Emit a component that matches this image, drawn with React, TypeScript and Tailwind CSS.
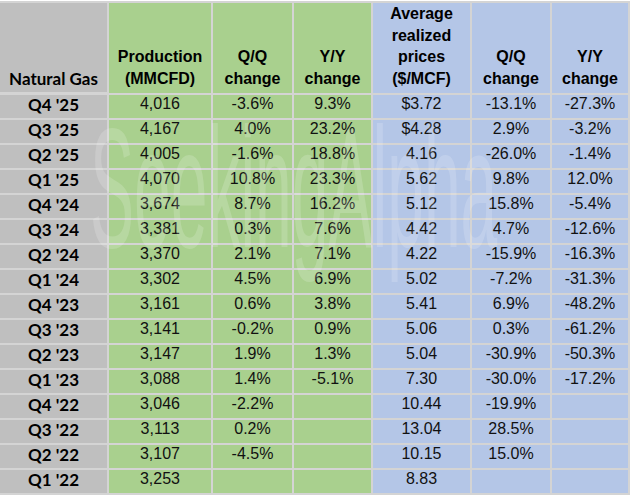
import React from "react";

type Row = {
  label: string;
  production: string;
  prodQq: string;
  prodYy: string;
  price: string;
  priceQq: string;
  priceYy: string;
};

const rows: Row[] = [
  { label: "Q4 '25", production: "4,016", prodQq: "-3.6%", prodYy: "9.3%", price: "$3.72", priceQq: "-13.1%", priceYy: "-27.3%" },
  { label: "Q3 '25", production: "4,167", prodQq: "4.0%", prodYy: "23.2%", price: "$4.28", priceQq: "2.9%", priceYy: "-3.2%" },
  { label: "Q2 '25", production: "4,005", prodQq: "-1.6%", prodYy: "18.8%", price: "4.16", priceQq: "-26.0%", priceYy: "-1.4%" },
  { label: "Q1 '25", production: "4,070", prodQq: "10.8%", prodYy: "23.3%", price: "5.62", priceQq: "9.8%", priceYy: "12.0%" },
  { label: "Q4 '24", production: "3,674", prodQq: "8.7%", prodYy: "16.2%", price: "5.12", priceQq: "15.8%", priceYy: "-5.4%" },
  { label: "Q3 '24", production: "3,381", prodQq: "0.3%", prodYy: "7.6%", price: "4.42", priceQq: "4.7%", priceYy: "-12.6%" },
  { label: "Q2 '24", production: "3,370", prodQq: "2.1%", prodYy: "7.1%", price: "4.22", priceQq: "-15.9%", priceYy: "-16.3%" },
  { label: "Q1 '24", production: "3,302", prodQq: "4.5%", prodYy: "6.9%", price: "5.02", priceQq: "-7.2%", priceYy: "-31.3%" },
  { label: "Q4 '23", production: "3,161", prodQq: "0.6%", prodYy: "3.8%", price: "5.41", priceQq: "6.9%", priceYy: "-48.2%" },
  { label: "Q3 '23", production: "3,141", prodQq: "-0.2%", prodYy: "0.9%", price: "5.06", priceQq: "0.3%", priceYy: "-61.2%" },
  { label: "Q2 '23", production: "3,147", prodQq: "1.9%", prodYy: "1.3%", price: "5.04", priceQq: "-30.9%", priceYy: "-50.3%" },
  { label: "Q1 '23", production: "3,088", prodQq: "1.4%", prodYy: "-5.1%", price: "7.30", priceQq: "-30.0%", priceYy: "-17.2%" },
  { label: "Q4 '22", production: "3,046", prodQq: "-2.2%", prodYy: "", price: "10.44", priceQq: "-19.9%", priceYy: "" },
  { label: "Q3 '22", production: "3,113", prodQq: "0.2%", prodYy: "", price: "13.04", priceQq: "28.5%", priceYy: "" },
  { label: "Q2 '22", production: "3,107", prodQq: "-4.5%", prodYy: "", price: "10.15", priceQq: "15.0%", priceYy: "" },
  { label: "Q1 '22", production: "3,253", prodQq: "", prodYy: "", price: "8.83", priceQq: "", priceYy: "" },
];

const head = "flex items-end justify-center pb-[4px] text-center font-bold text-[16px] leading-[21.5px] text-black";
const cell = "h-[23px] text-center text-[16px] leading-[18px] text-[#111]";
const green = "bg-[#a9d08e]";
const blue = "bg-[#b4c6e7]";

export default function App() {
  return (
    <div className="relative h-[496px] w-[632px] overflow-hidden bg-white font-['Liberation_Sans',Arial,sans-serif]">
      <div className="mt-[1px] grid w-[630px] grid-cols-[107px_102px_79px_77px_97px_78px_76px] gap-[2px] bg-[#d4d4d4] pb-[2px] pr-[2px] pt-[2px]">
        <div className="flex h-[89px] items-end justify-center bg-[#bfbfbf] pb-[3px] font-['Lato',sans-serif] text-[17px] font-bold leading-[21.5px] text-black">
          Natural Gas
        </div>
        <div className={`${head} ${green}`}>
          <span>
            Production
            <br />
            (MMCFD)
          </span>
        </div>
        <div className={`${head} ${green}`}>
          <span>
            Q/Q
            <br />
            change
          </span>
        </div>
        <div className={`${head} ${green}`}>
          <span>
            Y/Y
            <br />
            change
          </span>
        </div>
        <div className={`${head} ${blue}`}>
          <span>
            Average
            <br />
            realized
            <br />
            prices
            <br />
            ($/MCF)
          </span>
        </div>
        <div className={`${head} ${blue}`}>
          <span>
            Q/Q
            <br />
            change
          </span>
        </div>
        <div className={`${head} ${blue}`}>
          <span>
            Y/Y
            <br />
            change
          </span>
        </div>

        {rows.map((r) => (
          <React.Fragment key={r.label}>
            <div className="h-[23px] bg-[#bfbfbf] text-center font-['Lato',sans-serif] text-[17px] font-bold leading-[19px] text-black">
              {r.label}
            </div>
            <div className={`${cell} ${green}`}>{r.production}</div>
            <div className={`${cell} ${green}`}>{r.prodQq}</div>
            <div className={`${cell} ${green}`}>{r.prodYy}</div>
            <div className={`${cell} ${blue}`}>{r.price}</div>
            <div className={`${cell} ${blue}`}>{r.priceQq}</div>
            <div className={`${cell} ${blue}`}>{r.priceYy}</div>
          </React.Fragment>
        ))}
      </div>

      {/* faint watermark over the table */}
      <div className="pointer-events-none absolute left-[90px] top-[191px] origin-[0_56px] scale-y-[2.6] select-none whitespace-nowrap text-[66px] leading-[66px] text-white opacity-[0.17]">
        SeekingAlpha
      </div>
    </div>
  );
}
